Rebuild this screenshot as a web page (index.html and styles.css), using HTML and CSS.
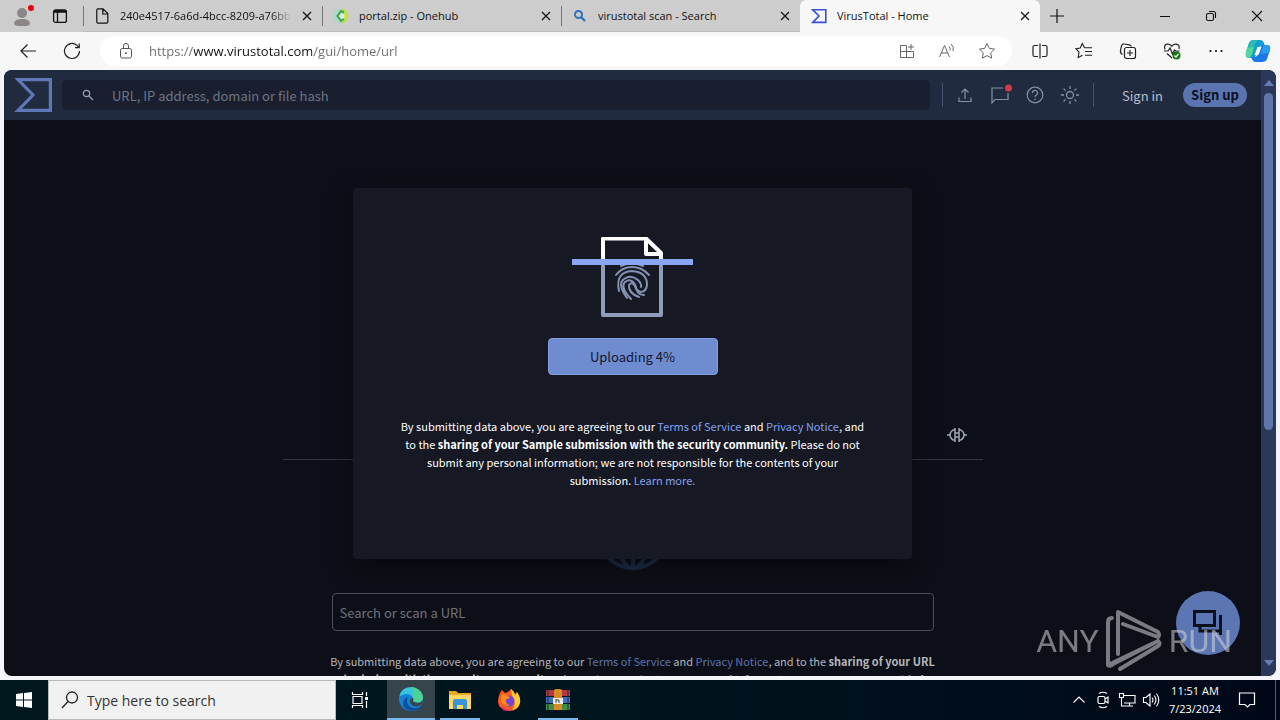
FILE: index.html
```html
<!DOCTYPE html>
<html lang="en">
<head>
    <meta charset="UTF-8">
    <meta name="viewport" content="width=device-width, initial-scale=1.0">
    <title>VirusTotal - Home</title>
    <link rel="stylesheet" href="styles.css">
</head>
<body>
    <div class="tab-strip">
        <div class="strip-start">
            <button class="icon-btn avatar" aria-label="Profile">
                <svg width="24" height="24" viewBox="0 0 24 24">
                    <circle cx="12" cy="9" r="5" fill="#8b8683"/>
                    <path d="M4 20c0-4 4-5 8-5s8 1 8 5c-1 2-4 2-8 2s-7 0-8-2z" fill="#8b8683"/>
                    <circle cx="21" cy="4" r="3" fill="#e3000f"/>
                </svg>
            </button>
            <button class="icon-btn tab-actions" aria-label="Tab actions menu">
                <svg width="16" height="16" viewBox="0 0 16 16" fill="none" stroke="#111" stroke-width="1.3">
                    <rect x="1.6" y="2" width="12.8" height="12.4" rx="2"/>
                    <path d="M1.6 3.500h12.800" stroke-width="2.500"/>
                    <path d="M5.500 4v10"/>
                </svg>
            </button>
        </div>
        <div class="tab">
            <svg width="16" height="16" viewBox="0 0 16 16" fill="none" stroke="#111" stroke-width="1.2">
                <path d="M4 .8h5L13.8 5.600V14q0 1.200-1.200 1.200H4q-1.200 0-1.200-1.200V2Q2.800.8 4 .8zM8.800 1v5h5"/>
            </svg>
            <span class="tab-title fade">240e4517-6a6d-4bcc-8209-a76bb</span>
            <button class="tab-close" aria-label="Close tab"><svg width="16" height="16" viewBox="0 0 16 16"><path d="M4 4l8 8M12 4l-8 8" stroke="#111" stroke-width="1.2"/></svg></button>
        </div>
        <div class="tab">
            <svg width="16" height="16" viewBox="0 0 16 16">
                <circle cx="8" cy="8" r="7.500" fill="#a8dcc4"/>
                <path d="M8 .5a7.500 7.500 0 0 1 0 15l2-4V5z" fill="#c5e04a"/>
                <path d="M11 4.500L8 3 4.500 8 8 13l3-2" fill="none" stroke="#3aa65a" stroke-width="2"/>
                <circle cx="9" cy="8" r="2.500" fill="#dff0d0"/>
            </svg>
            <span class="tab-title">portal.zip - Onehub</span>
            <button class="tab-close" aria-label="Close tab"><svg width="16" height="16" viewBox="0 0 16 16"><path d="M4 4l8 8M12 4l-8 8" stroke="#111" stroke-width="1.2"/></svg></button>
        </div>
        <div class="tab">
            <svg width="16" height="16" viewBox="0 0 16 16" fill="none" stroke="#2d74ba">
                <circle cx="6.500" cy="6.500" r="3.500" stroke-width="2"/>
                <path d="M9 9l4 4" stroke-width="2.400"/>
            </svg>
            <span class="tab-title">virustotal scan - Search</span>
            <button class="tab-close" aria-label="Close tab"><svg width="16" height="16" viewBox="0 0 16 16"><path d="M4 4l8 8M12 4l-8 8" stroke="#111" stroke-width="1.2"/></svg></button>
        </div>
        <div class="tab active">
            <svg width="16" height="16" viewBox="0 0 16 16" fill="none" stroke="#3450d8" stroke-width="1.600">
                <path d="M1.800 1.800h13v12.600h-13L8 8z"/>
            </svg>
            <span class="tab-title">VirusTotal - Home</span>
            <button class="tab-close" aria-label="Close tab"><svg width="16" height="16" viewBox="0 0 16 16"><path d="M4 4l8 8M12 4l-8 8" stroke="#111" stroke-width="1.2"/></svg></button>
        </div>
        <button class="icon-btn new-tab" aria-label="New tab">
            <svg width="16" height="16" viewBox="0 0 16 16"><path d="M8 1v14M1 8h14" stroke="#111" stroke-width="1.200"/></svg>
        </button>
        <div class="window-controls">
            <button class="icon-btn" aria-label="Minimize"><svg width="12" height="12" viewBox="0 0 12 12"><path d="M1 6.500h10" stroke="#111"/></svg></button>
            <button class="icon-btn" aria-label="Restore"><svg width="12" height="12" viewBox="0 0 12 12" fill="none" stroke="#111" stroke-width="1.100"><rect x="1.500" y="3.500" width="7" height="7" rx="1.500"/><path d="M4 1.500h4.500q2 0 2 2V8"/></svg></button>
            <button class="icon-btn" aria-label="Close"><svg width="12" height="12" viewBox="0 0 12 12"><path d="M1 1l10 10M11 1L1 11" stroke="#111" stroke-width="1.100"/></svg></button>
        </div>
    </div>

    <div class="toolbar">
        <button class="icon-btn tool" aria-label="Back">
            <svg width="18" height="18" viewBox="0 0 18 18" fill="none" stroke="#222" stroke-width="1.200"><path d="M17 9H2M8.500 2.500L2 9l6.500 6.500"/></svg>
        </button>
        <button class="icon-btn tool" aria-label="Refresh">
            <svg width="18" height="18" viewBox="0 0 18 18" fill="none" stroke="#222" stroke-width="1.200"><path d="M16.500 9A7.500 7.500 0 1 1 14 3.400l2 2M16.200 1.500v4.200H12"/></svg>
        </button>
        <div class="address-bar">
            <svg width="16" height="16" viewBox="0 0 16 16" fill="none" stroke="#555"><rect x="2.500" y="5.500" width="11" height="9.500" rx="1.800"/><path d="M5.500 5.500V3a2.500 2.500 0 0 1 5 0v2.500"/><circle cx="8" cy="10.200" r=".6" fill="#555"/></svg>
            <input type="text" class="address" aria-label="Address" value="https://www.virustotal.com/gui/home/url">
            <button class="icon-btn address-btn" aria-label="Apps">
                <svg width="16" height="16" viewBox="0 0 16 16" fill="none" stroke="#666"><path d="M1.500 2.500h6v12h-6zM1.500 8.500h13v6h-13M12 1v6M9 4h6"/></svg>
            </button>
            <button class="icon-btn address-btn" aria-label="Read aloud">
                <svg width="18" height="16" viewBox="0 0 18 16" fill="none" stroke="#666"><path d="M1.500 14L6.500 2.500l5 11.500M3.200 10h6.600M11 3.500q1.800 1.500 1 4M13 1q3.500 3 2 7"/></svg>
            </button>
            <button class="icon-btn address-btn" aria-label="Add to favorites">
                <svg width="18" height="18" viewBox="0 0 18 18" fill="none" stroke="#666" stroke-linejoin="round"><path d="M9 1.500l2.300 4.900 5.200.7-3.800 3.700 1 5.400L9 13.600l-4.700 2.600 1-5.400L1.500 7.100l5.200-.7z"/></svg>
            </button>
        </div>
        <div class="tools">
            <button class="icon-btn tool" aria-label="Split screen">
                <svg width="18" height="16" viewBox="0 0 18 16" fill="none" stroke="#222" stroke-width="1.200"><path d="M7 2.500H3.500q-1.500 0-1.500 1.500v8q0 1.500 1.500 1.500H7M11 2.500h3.500q1.500 0 1.500 1.500v8q0 1.500-1.500 1.500H11M9 .5v15"/></svg>
            </button>
            <button class="icon-btn tool" aria-label="Favorites">
                <svg width="18" height="18" viewBox="0 0 18 18" fill="none" stroke="#222" stroke-width="1.100"><path d="M9.500 5.800L7.300 1.500 5.200 6 1 6.700l3 3.400-.8 5.400 4.300-2.300M9.500 5.800H17M10 9.500h7M10 13.200h7"/></svg>
            </button>
            <button class="icon-btn tool" aria-label="Collections">
                <svg width="18" height="18" viewBox="0 0 18 18" fill="none" stroke="#222" stroke-width="1.200"><rect x="5.500" y="5.500" width="11" height="11" rx="2"/><path d="M11 8v6M8 11h6M3.500 12.500Q1 11 1.500 8.500l1-4.500Q3 1.500 5.500 2l5 .8q1.500.3 1.700 1.700"/></svg>
            </button>
            <button class="icon-btn tool" aria-label="Browser essentials">
                <svg width="18" height="18" viewBox="0 0 18 18" fill="none" stroke="#222" stroke-width="1.200"><path d="M2 7.500Q.5 3 4 2.200 7 1.500 8.800 4.300 10.500 1.500 13.500 2.200 17 3 16 7M1 9h4l2-3 2.500 6 2-4 1 1h4M4 11.500l5 4.500"/><circle cx="13.500" cy="13.500" r="4" fill="#107c10" stroke="none"/><path d="M11.500 13.500l1.500 1.500 2.500-3" stroke="#fff"/></svg>
            </button>
            <button class="icon-btn tool" aria-label="Settings and more">
                <svg width="16" height="16" viewBox="0 0 16 16" fill="#111"><circle cx="2.500" cy="8" r="1.100"/><circle cx="8" cy="8" r="1.100"/><circle cx="13.500" cy="8" r="1.100"/></svg>
            </button>
            <button class="icon-btn copilot" aria-label="Copilot">
                <svg width="26" height="24" viewBox="0 0 26 24">
                    <path d="M9 1h6q3 0 4 3l1 3h-3q-3 0-4 3l-2 6q-1 3-4 3H4q-4 0-3-5L4 4q1-3 5-3z" fill="#149ed0"/>
                    <path d="M9 1h4q-2 1-3 4l-3 10q-1 3-4 3-3-1-2-5L4 4q1-3 5-3z" fill="#28bdb4"/>
                    <path d="M1 13l1-4 7-1-2 7q-1 3-3 4-4 0-3-6z" fill="#53d79b"/>
                    <path d="M17 23h-6q-3 0-4-3l-1-2h3q3 0 4-3l2-6q1-3 4-3h3q4 0 3 5l-3 9q-1 3-5 3z" fill="#1a78e8"/>
                    <path d="M19 6h3q4 0 3 5l-1 3-8 1 1-5q1-3 2-4z" fill="#2b9bf2"/>
                    <path d="M12.500 8h4l-3 8h-4z" fill="#f4fbff"/>
                </svg>
            </button>
        </div>
    </div>

    <div class="viewport">
        <div class="page">
            <header class="vt-header">
                <a href="#" class="vt-logo" aria-label="VirusTotal">
                    <svg width="38" height="34" viewBox="0 0 38 34" fill="none" stroke="#5f78b5" stroke-width="3.200"><path d="M4 1.600h32.400v30.800H4L19 17z"/></svg>
                </a>
                <div class="vt-search">
                    <svg width="12" height="12" viewBox="0 0 12 12" fill="none" stroke="#98a0b0" stroke-width="1.200"><circle cx="4.500" cy="4.500" r="3.200"/><path d="M7 7l4 4"/></svg>
                    <input type="text" aria-label="Search" placeholder="URL, IP address, domain or file hash">
                </div>
                <div class="vt-actions">
                    <button class="icon-btn vt-btn" aria-label="Upload file">
                        <svg width="16" height="16" viewBox="0 0 16 16" fill="none" stroke="#8290a6" stroke-width="1.200"><path d="M2 10.500v4h12v-4M8 12V2M4.500 5.500L8 2l3.500 3.500"/></svg>
                    </button>
                    <button class="icon-btn vt-btn" aria-label="Notifications">
                        <svg width="24" height="22" viewBox="0 0 24 22" fill="none" stroke="#8290a6" stroke-width="1.200"><path d="M15 4H4v15l3-3.500h13V9"/><circle cx="20.500" cy="4" r="3.500" fill="#cf3b46" stroke="none"/></svg>
                    </button>
                    <button class="icon-btn vt-btn" aria-label="Help">
                        <svg width="18" height="18" viewBox="0 0 18 18" fill="none" stroke="#8290a6" stroke-width="1.200"><circle cx="9" cy="9" r="7.800"/><path d="M6.500 7a2.500 2.500 0 1 1 3.800 2Q9 9.800 9 11M9 12.500V14"/></svg>
                    </button>
                    <button class="icon-btn vt-btn" aria-label="Change theme">
                        <svg width="20" height="20" viewBox="0 0 20 20" fill="none" stroke="#8290a6" stroke-width="1.300"><circle cx="10" cy="10" r="3.500"/><path d="M10 1v3M10 16v3M1 10h3M16 10h3M3.600 3.600l2 2M14.400 14.400l2 2M3.600 16.400l2-2M14.400 5.600l2-2"/></svg>
                    </button>
                </div>
                <a href="#" class="sign-in">Sign in</a>
                <button class="sign-up">Sign up</button>
            </header>

            <main class="vt-main">
                <div class="home">
                    <div class="home-top">
                        <svg width="20" height="16" viewBox="0 0 20 16" fill="none" stroke="#a2a6b0" stroke-width="1.500"><path d="M0 8h3M17 8h3M8 1v14M12 1v14M8 3H6Q3 5 3 8t3 5h2M12 3h2q3 2 3 5t-3 5h-2M8 6h4M8 10h4"/></svg>
                    </div>
                    <div class="home-panel">
                        <svg class="globe" width="72" height="72" viewBox="0 0 72 72" fill="none" stroke="#1c2a44" stroke-width="4"><circle cx="36" cy="36" r="34"/><ellipse cx="36" cy="36" rx="16" ry="34"/><path d="M36 2v68M2 36h68M8 20h56M8 52h56"/></svg>
                        <input type="text" class="url-input" aria-label="URL" placeholder="Search or scan a URL">
                        <p class="terms">By submitting data above, you are agreeing to our <a href="#">Terms of Service</a> and <a href="#">Privacy Notice</a>, and to the <b>sharing of your URL submission with the security community.</b> Please do not submit any personal information; we are not responsible for the contents of your submission. <a href="#">Learn more.</a></p>
                    </div>
                </div>

                <div class="modal-layer">
                    <div class="modal" role="dialog" aria-label="Upload file">
                        <svg width="122" height="80" viewBox="0 0 122 80" fill="none">
                            <path d="M31 26V2q0-.5.500-.5H74L89 16v10M74 2v15h15" stroke="#fff" stroke-width="4" stroke-linejoin="round"/>
                            <path d="M31 27v51h58V27" stroke="#8e9cb7" stroke-width="4" stroke-linejoin="round"/>
                            <g stroke="#8292b0" stroke-width="2" stroke-linecap="round">
                                <path d="M49 29q11-5 22 0M44 38q6-8 16-8t17 8"/>
                                <path d="M47 54q-4-19 13-20 15 1 15 14-1 7-6 7-5-1-6-6-3-5-6-1-1 8 10 12"/>
                                <path d="M55 61q-10-14-3-19 7-5 14 1 4 4 3 7M59 62q-11-12-6-17 7-5 11 5 1 8 8 8"/>
                            </g>
                            <path d="M0 25h121" stroke="#8aa5f3" stroke-width="6"/>
                        </svg>
                        <button class="upload-btn">Uploading 4%</button>
                        <p class="modal-terms">By submitting data above, you are agreeing to our <a href="#">Terms of Service</a> and <a href="#">Privacy Notice</a>, and to the <b>sharing of your Sample submission with the security community.</b> Please do not submit any personal information; we are not responsible for the contents of your submission. <a href="#">Learn more.</a></p>
                    </div>
                </div>

                <button class="chat-btn" aria-label="Contact us">
                    <svg width="32" height="28" viewBox="0 0 32 28" fill="none" stroke="#0c101c" stroke-width="3"><path d="M2.500 2.500h20v14h-20zM28.500 6v20M8 17v5h20"/></svg>
                </button>
            </main>
        </div>
        <div class="scrollbar">
            <svg width="10" height="6" viewBox="0 0 10 6"><path d="M0 6l5-6 5 6z" fill="#667cb2"/></svg>
            <div class="thumb"></div>
            <svg width="10" height="6" viewBox="0 0 10 6"><path d="M0 0l5 6 5-6z" fill="#667cb2"/></svg>
        </div>
    </div>

    <div class="watermark">
        <span>ANY</span>
        <svg width="56" height="62" viewBox="0 0 56 62" fill="none" stroke="currentColor" stroke-width="4" stroke-linejoin="round" stroke-linecap="round">
            <path d="M6 8q-4 0-4 4v43l50-24M12 44V2l40 20q2 3 0 5L17 14M2 55q2 2 5-1l45-23q3 3 0 5L14 59"/>
        </svg>
        <span>RUN</span>
    </div>

    <div class="taskbar">
        <button class="icon-btn start" aria-label="Start">
            <svg width="16" height="16" viewBox="0 0 16 16" fill="#fff"><path d="M0 2l7-1v6.500H0zM8 .9L16 0v7.500H8zM0 8.500h7V15l-7-1zM8 8.500h8V16l-8-.9z"/></svg>
        </button>
        <div class="task-search">
            <svg width="18" height="18" viewBox="0 0 18 18" fill="none" stroke="#222" stroke-width="1.300"><circle cx="11" cy="6.500" r="5.500"/><path d="M7 10.500L1 17"/></svg>
            <input type="text" aria-label="Search Windows" placeholder="Type here to search">
        </div>
        <button class="icon-btn app task-view" aria-label="Task View">
            <svg width="18" height="16" viewBox="0 0 18 16" fill="none" stroke="#fff" stroke-width="1.200"><path d="M2 4.500h9v7H2zM1.500 0v2.500h10V0M1.500 16v-2.500h10V16M15.500 0v4M15.500 9v7"/><path d="M14 5h3v3h-3z" fill="#fff" stroke="none"/></svg>
        </button>
        <button class="icon-btn app current" aria-label="Microsoft Edge">
            <svg width="24" height="24" viewBox="0 0 24 24">
                <circle cx="12" cy="12" r="12" fill="#1681d2"/>
                <path d="M.5 9.500C2-1.500 18-3 23 7c3 7-3 10-8 8-2-1 0-2-1-4-2-5-9-5-13.500-1.500z" fill="#35c6dd"/>
                <path d="M11 0c8-.5 14 6 13 12-1 4-6 4.500-9 3-2-1 0-2-1-4 0-4 2-7-3-11z" fill="#55d47b" opacity=".75"/>
                <path d="M9 10c-3 5 1 12 8 11l4-1c-4 5-12 5-16 0-2-5 0-9 4-10z" fill="#0c4f9c"/>
                <path d="M14 11c1 2-1 3 1 4 3 1.500 7 1 9-2l-1 4-3 2c-6 1-9-1-9-5 0-2 1-3 3-3z" fill="#36454b"/>
            </svg>
        </button>
        <button class="icon-btn app open" aria-label="File Explorer">
            <svg width="22" height="20" viewBox="0 0 22 20"><path d="M0 1h7l2 2h13v16H0z" fill="#e9a91e"/><path d="M0 5h22v14H0z" fill="#ffd766"/><path d="M4 19v-8q0-2 2-2h10q2 0 2 2v8h-4v-4H8v4z" fill="#3994d8"/></svg>
        </button>
        <button class="icon-btn app" aria-label="Firefox">
            <svg width="24" height="24" viewBox="0 0 24 24"><path d="M3 5l2-3 3 3q4-1 6-4l3 3 1 3 2-3q4 6 3 11-2 8-11 8Q2 22 1 14 1 9 3 5z" fill="#ff5a24"/><path d="M14 1l3 3 1 3 2-3q4 6 3 11-2 6-8 7 5-6 1-12-2-5-2-9z" fill="#ffcc2e"/><path d="M3 16q4 7 13 5-5 3-10 1z" fill="#ed2d6d"/><circle cx="12" cy="13" r="5.500" fill="#7542d6"/><path d="M5 7q3-2 5 1l3 1q-2 3-4 2-1 5 4 6-5 2-8-2-2-4 0-8z" fill="#ff8b1c"/></svg>
        </button>
        <button class="icon-btn app open" aria-label="WinRAR">
            <svg width="24" height="22" viewBox="0 0 24 22"><path d="M0 1h24v6H0z" fill="#b23845"/><path d="M0 8h24v6H0z" fill="#3e6fc0"/><path d="M0 15h24v6H0z" fill="#3f9045"/><path d="M2 1v20M22 1v20" stroke="#232a38"/><path d="M8 1q4-3 8 0v20H8z" fill="#db8a28"/><path d="M7 9h10v6H7z" fill="#f3ede0"/><path d="M10 10v4M10 11h3v3" stroke="#444" fill="none"/></svg>
        </button>
        <div class="tray">
            <button class="icon-btn tray-btn" aria-label="Show hidden icons"><svg width="14" height="14" viewBox="0 0 14 14" fill="none" stroke="#fff" stroke-width="1.200"><path d="M1.500 9.500L7 4l5.500 5.500"/></svg></button>
            <button class="icon-btn tray-btn" aria-label="Meet Now"><svg width="16" height="18" viewBox="0 0 16 18" fill="none" stroke="#fff" stroke-width="1.200"><rect x="3" y="5.500" width="7" height="7" rx="1.500"/><path d="M10 8l3-2v6l-3-2M4 2.500q4-2.500 8 0M4 15.500q4 2.500 8 0"/></svg></button>
            <button class="icon-btn tray-btn" aria-label="Network"><svg width="18" height="16" viewBox="0 0 18 16" fill="none" stroke="#fff" stroke-width="1.100"><path d="M6 3.500h11v7.500H6M11.500 11v3M8 14h7M1.500 1.500h4v4h-4zM3.500 5.500V14H8"/></svg></button>
            <button class="icon-btn tray-btn" aria-label="Volume"><svg width="18" height="16" viewBox="0 0 18 16" fill="none" stroke="#fff" stroke-width="1.100"><path d="M1.500 5.500H4L8 2v12l-4-3.500H1.500zM10 5.500q2 2.500 0 5M12.200 3.500q3.500 4.500 0 9M14.500 1.500q4.500 6.500 0 13"/></svg></button>
            <div class="clock">
                <span>11:51 AM</span>
                <span>7/23/2024</span>
            </div>
            <button class="icon-btn notify" aria-label="Action center"><svg width="18" height="18" viewBox="0 0 18 18" fill="none" stroke="#fff" stroke-width="1.200"><path d="M1.500 2h15v11.500H12L9.500 16 7 13.500H1.500z"/></svg></button>
            <div class="show-desktop"></div>
        </div>
    </div>
</body>
</html>
```
FILE: styles.css
```css
* {
    box-sizing: border-box;
}

body {
    margin: 0;
    height: 100vh;
    display: flex;
    flex-direction: column;
    overflow: hidden;
    position: relative;
    background: #f3f5fa;
    font-family: "Open Sans", "Noto Sans", sans-serif;
    font-size: 11px;
    color: #111;
}

svg {
    display: block;
    flex: none;
}

button, input {
    font-family: inherit;
    border: none;
    padding: 0;
    background: transparent;
}

input {
    min-width: 0;
    outline: none;
}

a {
    color: #85a2f0;
    text-decoration: none;
}

.icon-btn {
    display: flex;
    align-items: center;
    justify-content: center;
    flex: none;
}

/* Browser tabs */
.tab-strip {
    display: flex;
    height: 32px;
    flex: none;
    background: #cdcdcd;
}

.strip-start {
    display: flex;
    width: 83px;
    flex: none;
    padding-left: 10px;
}

.avatar {
    width: 24px;
}

.tab-actions {
    width: 52px;
}

.tab {
    display: flex;
    align-items: center;
    flex: 0 1 239px;
    min-width: 0;
    padding: 0 7px 0 11px;
    position: relative;
    border-bottom: 1px solid #bcbcbc;
}

.tab::before {
    content: "";
    width: 1px;
    height: 20px;
    position: absolute;
    left: 0;
    background: #777;
}

.tab.active {
    flex-basis: 240px;
    background: #f7f7f7;
    border-radius: 6px 6px 0 0;
    border-bottom-color: #f7f7f7;
}

.tab.active::before {
    display: none;
}

.tab-title {
    flex: 1;
    margin: 0 7px 0 10px;
    white-space: nowrap;
    overflow: hidden;
}

.fade {
    -webkit-mask-image: linear-gradient(to right, #000 88%, transparent);
    mask-image: linear-gradient(to right, #000 88%, transparent);
}

.new-tab {
    width: 34px;
}

.window-controls {
    display: flex;
    margin-left: auto;
}

.window-controls .icon-btn {
    width: 46px;
}

/* Toolbar */
.toolbar {
    display: flex;
    align-items: center;
    height: 38px;
    flex: none;
    padding: 0 2px 0 6px;
    background: #f7f7f7;
}

.tool {
    width: 44px;
    height: 30px;
}

.address-bar {
    display: flex;
    align-items: center;
    flex: 1;
    height: 30px;
    margin: 0 6px;
    padding: 0 5px 0 18px;
    border-radius: 15px;
    background: #fff;
}

.address {
    flex: 1;
    height: 24px;
    margin-left: 15px;
    font-size: 13px;
    color: transparent;
    background: linear-gradient(to right, #6b6b6b 45px, #111 45px, #111 163px, #6b6b6b 163px);
    -webkit-background-clip: text;
    background-clip: text;
}

.address-btn {
    width: 40px;
}

.tools {
    display: flex;
}

.copilot {
    width: 40px;
}

/* Web page */
.viewport {
    display: flex;
    flex: 1;
    min-height: 0;
    margin: 0 4px 4px;
    border-radius: 8px;
    overflow: hidden;
    background: #0d0f18;
    font-family: "Noto Sans CJK SC", "Noto Sans", sans-serif;
}

.page {
    display: flex;
    flex-direction: column;
    flex: 1;
    min-width: 0;
}

.vt-header {
    display: flex;
    align-items: center;
    height: 50px;
    flex: none;
    padding: 0 14px 0 10px;
    background: #202b40;
    font-size: 13px;
}

.vt-search {
    display: flex;
    align-items: center;
    flex: 1;
    height: 30px;
    margin: 0 12px 0 10px;
    padding-left: 20px;
    border-radius: 4px;
    background: #1a1f2f;
}

.vt-search input {
    flex: 1;
    margin-left: 18px;
    font-size: 13px;
    color: #ccd;
}

.vt-search input::placeholder {
    color: #6d7484;
}

.vt-actions {
    display: flex;
    height: 24px;
    padding: 0 5px;
    border-left: 1px solid #45526a;
    border-right: 1px solid #45526a;
}

.vt-btn {
    width: 35px;
}

.sign-in {
    margin: 0 20px 0 28px;
    color: #b9bfca;
}

.sign-up {
    width: 64px;
    height: 24px;
    border-radius: 12px;
    background: #5a74b0;
    color: #0b1020;
    font-size: 13px;
    font-weight: 700;
    line-height: 24px;
}

.vt-main {
    flex: 1;
    min-height: 0;
    position: relative;
    overflow: hidden;
}

.home {
    max-width: 700px;
    margin: 0 auto;
}

.home-top {
    display: flex;
    align-items: flex-end;
    justify-content: flex-end;
    height: 340px;
    padding: 0 16px 16px;
    border-bottom: 1px solid #33363f;
}

.home-panel {
    display: flex;
    flex-direction: column;
    align-items: center;
    padding: 38px 49px 0;
}

.url-input {
    width: 100%;
    height: 38px;
    margin-top: 23px;
    padding: 0 7px;
    border: 1px solid #4a4d58;
    border-radius: 4px;
    font-size: 13px;
    color: #ccd;
}

.url-input::placeholder {
    color: #6f727b;
}

.terms {
    margin: 21px -6px 0;
    line-height: 18px;
    text-align: center;
    color: #b4b6bb;
}

.terms a {
    color: #5a74b0;
}

/* Upload dialog */
.modal-layer {
    display: flex;
    justify-content: center;
    align-items: flex-start;
    position: absolute;
    inset: 0;
    padding-top: 68px;
}

.modal {
    display: flex;
    flex-direction: column;
    align-items: center;
    width: 559px;
    padding: 49px 45px 70px;
    border-radius: 4px;
    background: #161824;
    box-shadow: 0 8px 24px rgba(0, 0, 0, 0.4);
}

.upload-btn {
    width: 170px;
    height: 37px;
    margin-top: 21px;
    border: 1px solid #839fe4;
    border-radius: 4px;
    background: #6f8cd0;
    color: #10182c;
    font-size: 13px;
}

.modal-terms {
    margin: 42px 0 0;
    line-height: 18px;
    text-align: center;
    color: #fff;
}

.chat-btn {
    display: flex;
    align-items: center;
    justify-content: center;
    position: absolute;
    right: 21px;
    bottom: 21px;
    width: 64px;
    height: 64px;
    border-radius: 50%;
    background: #5c76b4;
}

.scrollbar {
    display: flex;
    flex-direction: column;
    align-items: center;
    width: 15px;
    padding: 10px 0;
    background: #2b3859;
}

.thumb {
    width: 9px;
    height: 337px;
    margin: 7px 0 auto;
    border-radius: 5px;
    background: #6075a9;
}

/* Watermark over the desktop */
.watermark {
    display: flex;
    align-items: center;
    gap: 7px;
    position: absolute;
    right: 48px;
    bottom: 48px;
    font-family: Roboto, sans-serif;
    font-size: 32px;
    color: #d5d5d8;
    opacity: 0.55;
    pointer-events: none;
}

/* Taskbar */
.taskbar {
    display: flex;
    height: 40px;
    flex: none;
    background: linear-gradient(to right, #00191f, #00141e 50%, #000818);
    color: #fff;
}

.start {
    width: 48px;
}

.task-search {
    display: flex;
    align-items: center;
    width: 288px;
    padding-left: 12px;
    border: 1px solid #b9b9b9;
    background: #f1f1f1;
}

.task-search input {
    flex: 1;
    margin-left: 8px;
    font-size: 14px;
}

.task-search input::placeholder {
    color: #333;
}

.app {
    width: 48px;
    margin-right: 1px;
}

.task-view {
    margin-right: 3px;
}

.current {
    background: #36454b;
    border-bottom: 2px solid #76b9ed;
}

.open {
    background: linear-gradient(#76b9ed, #76b9ed) center bottom / 40px 2px no-repeat;
}

.tray {
    display: flex;
    margin-left: auto;
}

.tray-btn {
    width: 24px;
}

.clock {
    display: flex;
    flex-direction: column;
    align-items: center;
    justify-content: center;
    width: 64px;
    line-height: 18px;
}

.notify {
    width: 40px;
}

.show-desktop {
    width: 5px;
    margin-left: 8px;
    border-left: 1px solid #54606b;
}
```
